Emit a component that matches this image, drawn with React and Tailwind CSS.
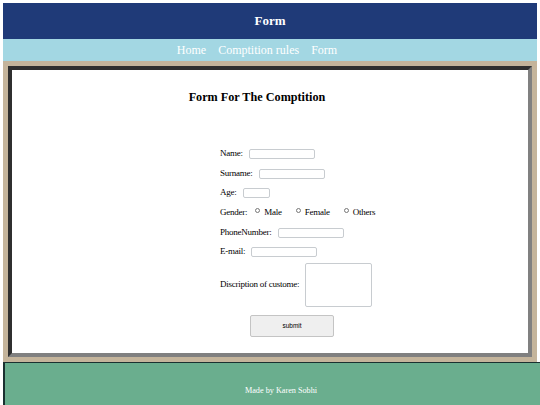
import React from 'react';

const serif = { fontFamily: '"Liberation Serif", "Times New Roman", serif' };

const Field = ({ label, inputClass }) => (
  <div className="flex items-center h-[19.5px]">
    <label className="text-[9px] tracking-[-0.25px] text-black mr-[6px]">{label}</label>
    <input type="text" className={`h-[10px] border border-[#c8ccd0] rounded-[2px] bg-white ${inputClass}`} />
  </div>
);

const Radio = ({ label }) => (
  <span className="flex items-center">
    <span className="w-[5px] h-[5px] rounded-full border border-[#777] bg-white -mt-[4px] mr-[4px]" />
    <span>{label}</span>
  </span>
);

export default function App() {
  return (
    <div className="w-[540px] h-[405px] overflow-hidden bg-white pt-[3px] pl-[3px]" style={serif}>
      <div className="w-[534px]">
        {/* header */}
        <header className="h-[36px] bg-[#1f3a78] flex items-center justify-center">
          <h1 className="text-white font-bold text-[13px]">Form</h1>
        </header>

        {/* nav */}
        <nav className="h-[22px] bg-[#a3d7e3] flex items-center justify-center pr-[26px]">
          <ul className="flex gap-[12px] text-white text-[12px]">
            <li>Home</li>
            <li>Comptition rules</li>
            <li>Form</li>
          </ul>
        </nav>

        {/* main */}
        <main className="bg-[#c4b49b] p-[5px]">
          <div className="h-[291px] bg-white border-[4px] border-t-[#2f2f2f] border-l-[#2f2f2f] border-b-[#808080] border-r-[#808080]">
            <h2 className="text-center font-bold text-[12.2px] mt-[18px] pr-[26px] text-black">Form For The Comptition</h2>

            <form className="ml-[208px] mt-[38px] flex flex-col">
              <Field label="Name:" inputClass="w-[66px]" />
              <Field label="Surname:" inputClass="w-[66px]" />
              <Field label="Age:" inputClass="w-[27px]" />
              <div className="flex items-center h-[20px] text-[9px] tracking-[-0.25px] text-black">
                <span className="mr-[8px]">Gender:</span>
                <span className="flex gap-[14px]">
                  <Radio label="Male" />
                  <Radio label="Female" />
                  <Radio label="Others" />
                </span>
              </div>
              <Field label="PhoneNumber:" inputClass="w-[66px]" />
              <Field label="E-mail:" inputClass="w-[66px]" />
              <div className="flex items-center mt-[1px]">
                <label className="text-[9px] tracking-[-0.25px] text-black mr-[6px]">Discription of custome:</label>
                <textarea className="w-[67px] h-[44px] border border-[#c8ccd0] rounded-[2px] resize-none" />
              </div>
              <button
                type="button"
                className="ml-[30px] mt-[8px] w-[84px] h-[22px] bg-[#efefef] border border-[#c4c4c4] rounded-[2px] text-[6.5px] text-black"
                style={{ fontFamily: '"Liberation Sans", Arial, sans-serif' }}
              >
                submit
              </button>
            </form>
          </div>
        </main>

        {/* footer */}
        <footer className="w-[537px] h-[60px] bg-[#6aae8e] border-t border-t-[#1a3030] border-l-2 border-l-[#1a3030] flex justify-center pt-[22px] pl-[17px]">
          <p className="text-white text-[8.2px]">Made by Karen Sobhi</p>
        </footer>
      </div>
    </div>
  );
}
